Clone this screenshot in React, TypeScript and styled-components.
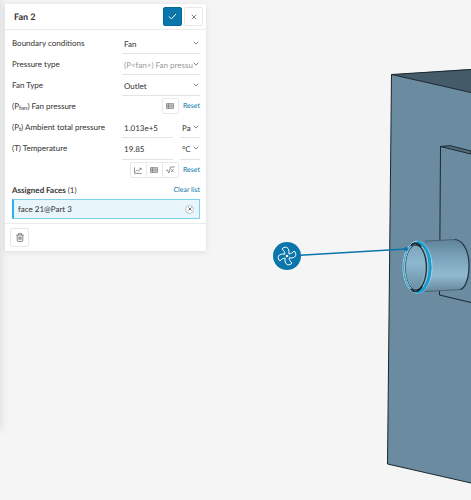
import React from "react";
import styled, { createGlobalStyle } from "styled-components";

const GlobalStyle = createGlobalStyle`
  *, *::before, *::after { box-sizing: border-box; }
  html, body, #root { height: 100%; }
  body { margin: 0; background: #f5f5f5; overflow: hidden; text-rendering: geometricPrecision; }
  body, button, input, select { font-family: Lato, "Open Sans", sans-serif; }
  button, input, select { text-rendering: inherit; }
`;

const Workbench = styled.main`
  position: relative;
  min-height: 100%;
  padding: 4px 5px;
  color: #333;
  font-size: 8px;
  line-height: 12px;
`;

const Viewport = styled.svg`
  position: absolute;
  inset: 0;
  width: 100%;
  height: 100%;
`;

const DockShadow = styled.div`
  position: absolute;
  left: -10px;
  top: -10px;
  width: 10px;
  height: 440px;
  box-shadow: 0 0 10px rgba(0, 0, 0, 0.12);
`;

const Panel = styled.form`
  position: relative;
  width: 43%;
  min-width: 201px;
  max-width: 240px;
  background: #fff;
  box-shadow: 0 1px 6px rgba(0, 0, 0, 0.1);
`;

const Header = styled.header`
  display: flex;
  align-items: center;
  gap: 2px;
  height: 26px;
  padding: 0 3px 0 9px;
  border-bottom: 1px solid #ebebeb;
`;

const Title = styled.h1`
  flex: 1;
  margin: 0;
  font-size: 9px;
  font-weight: 700;
`;

const IconButton = styled.button<{ $primary?: boolean }>`
  display: grid;
  place-items: center;
  width: 19px;
  height: 19px;
  padding: 0;
  border: 1px solid ${(p) => (p.$primary ? "#06679a" : "#e8e8e8")};
  border-radius: 2px;
  background: ${(p) => (p.$primary ? "#0b76ab" : "#fff")};
  color: ${(p) => (p.$primary ? "#fff" : "#666")};
`;

const Body = styled.div`
  padding: 2px 6px 4px 7px;
`;

const Row = styled.div<{ $tall?: boolean }>`
  display: grid;
  grid-template-columns: 110px minmax(0, 1fr);
  height: ${(p) => (p.$tall ? 23 : 21)}px;
`;

const Label = styled.label`
  line-height: 22px;
  white-space: nowrap;

  sub {
    font-size: 6px;
    line-height: 0;
    vertical-align: -1px;
  }
`;

const SelectBox = styled.span`
  display: grid;
  align-items: center;
  border-bottom: 1px solid #e4e4e4;

  & > * { grid-area: 1 / 1; }
  & > svg { justify-self: end; margin-right: 1px; pointer-events: none; }
`;

const Select = styled.select`
  appearance: none;
  width: 100%;
  height: 100%;
  min-width: 0;
  padding: 2px 7px 0 2px;
  border: 0;
  background: transparent;
  color: #333;
  font-size: 8px;

  &:disabled { color: #999; opacity: 1; }
`;

const Quantity = styled.div`
  display: grid;
  grid-template-columns: minmax(0, 1fr) 20px;
  gap: 7px;
`;

const NumberInput = styled.input`
  width: 100%;
  min-width: 0;
  padding: 2px 2px 0;
  border: 0;
  border-bottom: 1px solid #e4e4e4;
  background: transparent;
  color: #333;
  font-size: 8px;
`;

const Actions = styled.div`
  display: flex;
  align-items: center;
  justify-content: flex-end;
  gap: 4px;
  min-height: 20px;
`;

const ToolGroup = styled.div`
  display: flex;
  border: 1px solid #e8e8e8;
  border-radius: 2px;
`;

const Tool = styled.button`
  display: grid;
  place-items: center;
  width: 15px;
  height: 14px;
  padding: 0;
  border: 0;
  background: transparent;
  color: #777;

  & + & {
    width: 16px;
    border-left: 1px solid #e8e8e8;
  }
`;

const TextLink = styled.a`
  color: #0b76ab;
  font-size: 7px;
  text-decoration: none;
`;

const FacesHeading = styled.div`
  display: flex;
  align-items: center;
  justify-content: space-between;
  height: 19px;
`;

const FacesTitle = styled.h2`
  margin: 0;
  font-size: 8px;
  font-weight: 700;

  span { font-weight: 400; }
`;

const FaceItem = styled.div`
  display: flex;
  align-items: center;
  justify-content: space-between;
  height: 20px;
  padding: 0 5px 0 4px;
  border: 1px solid #7fd0ee;
  border-left: 2px solid #2ab3e6;
  background: #e8f5fb;
`;

const RemoveButton = styled.button`
  display: grid;
  place-items: center;
  width: 9px;
  height: 9px;
  padding: 0;
  border: 1px solid #b9c3c8;
  border-radius: 50%;
  background: #fff;
  color: #444;
`;

const Footer = styled.footer`
  padding: 4px 5px;
  border-top: 1px solid #ebebeb;
`;

const Chevron = () => (
  <svg width="6" height="4" viewBox="0 0 6 4" fill="none" stroke="#777" strokeWidth="0.9">
    <path d="M.7.7 3 3.1 5.3.7" />
  </svg>
);

const Cross = ({ size }: { size: number }) => (
  <svg width={size} height={size} viewBox="0 0 6 6" fill="none" stroke="currentColor" strokeWidth={size > 5 ? 0.8 : 1.2}>
    <path d="M.7.7l4.6 4.6M5.3.7.7 5.3" />
  </svg>
);

const TableIcon = () => (
  <svg width="8" height="6" viewBox="0 0 8 6" fill="none" stroke="currentColor" strokeWidth="0.7">
    <rect x=".4" y=".4" width="7.2" height="5.2" rx=".4" fill="#ddd" />
    <path d="M2.5.4v5.2M.4 2.1h7.2M.4 3.8h7.2" />
  </svg>
);

const ChartIcon = () => (
  <svg width="8" height="7" viewBox="0 0 8 7" fill="none" stroke="currentColor" strokeWidth="0.8">
    <path d="M.5.3v6.1h7.2M1.6 4.6l1.7-1.7 1.4 1L7.1 1.5M5.4 1.3h1.8V3" />
  </svg>
);

const FormulaIcon = () => (
  <svg width="9" height="8" viewBox="0 0 9 8" fill="none" stroke="currentColor" strokeWidth="0.8">
    <path d="M.3 4.5l1-.6L2.8 7 4.6 1h4.1M5.2 3.3l2.4 2.8M7.6 3.3 5.2 6.1" />
  </svg>
);

const TrashIcon = () => (
  <svg width="8" height="9" viewBox="0 0 8 9" fill="none" stroke="currentColor" strokeWidth="0.8">
    <path d="M.4 2h7.2M2.5 2V.6h3V2M1.2 2v5.5q0 .9.9.9h3.8q.9 0 .9-.9V2M3 3.5v3.3M4 3.5v3.3M5 3.5v3.3" />
  </svg>
);

const blade = "M-2.2-1.8C-2-4-3.2-5.6-5-7C-4.2-8.4-2-9.2-.2-8.6C1.8-7.6 2.4-4.6 1.8-2.2";

const Scene = () => (
  <Viewport viewBox="0 0 471 500" preserveAspectRatio="xMaxYMin slice" aria-label="Model viewport">
    <defs>
      <linearGradient id="pipe" x1="0" y1="0" x2="0" y2="1">
        <stop offset="0" stopColor="#5f8296" />
        <stop offset=".35" stopColor="#7ba4bc" />
        <stop offset=".68" stopColor="#91bad1" />
        <stop offset="1" stopColor="#668799" />
      </linearGradient>
      <linearGradient id="bore" x1="0" y1="0" x2="0" y2="1">
        <stop offset="0" stopColor="#7ba5bd" />
        <stop offset=".4" stopColor="#8cb8d0" />
        <stop offset="1" stopColor="#6a8fa4" />
      </linearGradient>
    </defs>
    <path d="M391.5 74.5 471 69v24z" fill="#455b69" />
    <path d="M391.5 74.5 471 92.5V483l-83.5-19z" fill="#6a8ba0" />
    <g fill="none" stroke="#1b272e" strokeWidth="1">
      <path d="M471 69.5 391.5 74.5 471 92.5M391.5 74.5l-4 389.5L471 483" />
      <path d="M440.5 146.5 450 145.7 471 151v3z" fill="#536f80" />
      <path d="M440.5 146.5 439.5 295 471 302.5" />
    </g>
    <path d="M419 241.5 455 239.5C463 240 469 251 469 265S465 289 460 289.5L419 292z" fill="url(#pipe)" />
    <path d="M425 241.2 455 239.5" fill="none" stroke="#405b6b" strokeWidth=".8" />
    <path d="M455 239.5C463 240 469 251 469 265S465 289 460 289.5" fill="none" stroke="#22323c" strokeWidth="1.2" />
    <path d="M460 289.5 425 291.5" fill="none" stroke="#405b6b" strokeWidth=".8" />
    <ellipse cx="417.5" cy="267.2" rx="14.5" ry="26" fill="#5f8398" stroke="#9fdcf2" />
    <ellipse cx="417.3" cy="267.2" rx="13.3" ry="24.8" fill="none" stroke="#2a9cc8" strokeWidth="1.2" />
    <path d="M417 242C426 243 430 255 430 267.2S426 291 417 292.5" fill="none" stroke="#16a0d4" strokeWidth="2.6" />
    <ellipse cx="416.3" cy="267.2" rx="11.7" ry="23.3" fill="#6c91a6" stroke="#a5dcf0" strokeWidth=".8" />
    <ellipse cx="416.2" cy="267.5" rx="10.2" ry="22.2" fill="none" stroke="#1b2931" strokeWidth="1.1" />
    <path d="M411 246C413 242.5 418 242.5 421 247M411 289C414 293 419 292 422 286" fill="none" stroke="#1b2931" strokeWidth="1.8" />
    <ellipse cx="415.5" cy="267.5" rx="9.4" ry="21.5" fill="url(#bore)" stroke="#9fc3d5" strokeWidth=".5" />
    <path d="M300 255.3 406 249" stroke="#0b76ab" strokeWidth="1.5" />
    <circle cx="406" cy="249" r="2" fill="#0b76ab" />
    <circle cx="287" cy="256" r="14" fill="#0b76ab" />
    <g transform="translate(287 256)" fill="none" stroke="#fff" strokeWidth="1" strokeLinejoin="round">
      {[0, 90, 180, 270].map((angle) => (
        <path key={angle} d={blade} transform={`rotate(${angle})`} />
      ))}
      <circle r="1.3" fill="#fff" stroke="none" />
    </g>
  </Viewport>
);

type ChoiceProps = { id?: string; text: string; disabled?: boolean; label?: string };

const Choice = ({ id, text, disabled, label }: ChoiceProps) => (
  <SelectBox>
    <Select id={id} disabled={disabled} aria-label={label}>
      <option>{text}</option>
    </Select>
    <Chevron />
  </SelectBox>
);

export default function App() {
  return (
    <>
      <GlobalStyle />
      <Workbench>
        <Scene />
        <DockShadow />
        <Panel onSubmit={(e) => e.preventDefault()}>
          <Header>
            <Title>Fan 2</Title>
            <IconButton $primary type="submit" aria-label="Apply">
              <svg width="9" height="7" viewBox="0 0 9 7" fill="none" stroke="currentColor">
                <path d="M1 3.5 3.4 5.9 8 1" />
              </svg>
            </IconButton>
            <IconButton type="button" aria-label="Close">
              <Cross size={6} />
            </IconButton>
          </Header>
          <Body>
            <Row>
              <Label htmlFor="condition">Boundary conditions</Label>
              <Choice id="condition" text="Fan" />
            </Row>
            <Row>
              <Label htmlFor="pressure-type">Pressure type</Label>
              <Choice id="pressure-type" text="(P<fan>) Fan pressu" disabled />
            </Row>
            <Row>
              <Label htmlFor="fan-type">Fan Type</Label>
              <Choice id="fan-type" text="Outlet" />
            </Row>
            <Row>
              <Label as="span">(P<sub>fan</sub>) Fan pressure</Label>
              <Actions>
                <ToolGroup>
                  <Tool type="button" aria-label="Fan pressure table"><TableIcon /></Tool>
                </ToolGroup>
                <TextLink href="#reset-pressure">Reset</TextLink>
              </Actions>
            </Row>
            <Row>
              <Label htmlFor="ambient">(P<sub>t</sub>) Ambient total pressure</Label>
              <Quantity>
                <NumberInput id="ambient" defaultValue="1.013e+5" />
                <Choice text="Pa" label="Pressure unit" />
              </Quantity>
            </Row>
            <Row $tall>
              <Label htmlFor="temperature">(T) Temperature</Label>
              <Quantity>
                <NumberInput id="temperature" defaultValue="19.85" />
                <Choice text="°C" label="Temperature unit" />
              </Quantity>
            </Row>
            <Actions>
              <ToolGroup>
                <Tool type="button" aria-label="Temperature chart"><ChartIcon /></Tool>
                <Tool type="button" aria-label="Temperature table"><TableIcon /></Tool>
                <Tool type="button" aria-label="Temperature formula"><FormulaIcon /></Tool>
              </ToolGroup>
              <TextLink href="#reset-temperature">Reset</TextLink>
            </Actions>
            <FacesHeading>
              <FacesTitle>Assigned Faces <span>(1)</span></FacesTitle>
              <TextLink href="#clear">Clear list</TextLink>
            </FacesHeading>
            <FaceItem>
              face 21@Part 3
              <RemoveButton type="button" aria-label="Remove face 21@Part 3"><Cross size={4} /></RemoveButton>
            </FaceItem>
          </Body>
          <Footer>
            <IconButton type="button" aria-label="Delete"><TrashIcon /></IconButton>
          </Footer>
        </Panel>
      </Workbench>
    </>
  );
}
